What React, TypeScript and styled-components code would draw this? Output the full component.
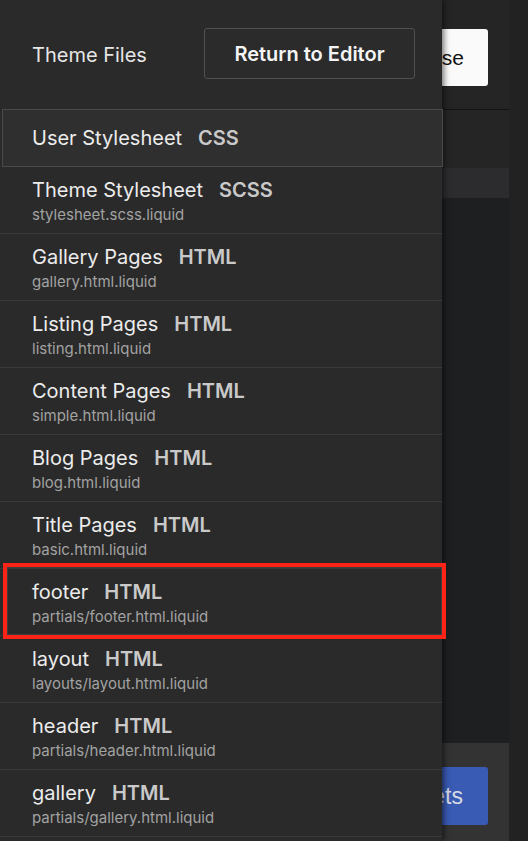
import styled, { createGlobalStyle } from 'styled-components';

const GlobalStyle = createGlobalStyle`
  html, body {
    margin: 0;
    padding: 0;
    height: 100%;
    background: #232323;
    overflow: hidden;
  }
  #root {
    height: 100%;
  }
  * {
    box-sizing: border-box;
  }
`;

const Page = styled.div`
  position: relative;
  display: flex;
  height: 100vh;
  background: #232323;
  font-family: Inter, 'Noto Sans', sans-serif;
`;

const Workspace = styled.div`
  display: flex;
  flex-direction: column;
  flex: 1;
  background: #252525;
`;

const SideStrip = styled.div`
  width: 19px;
  background: #222222;
`;

const TopBar = styled.div`
  display: flex;
  justify-content: flex-end;
  height: 110px;
  padding: 29px 21px 0 0;
  border-bottom: 1px solid #121212;
`;

const CloseButton = styled.button`
  height: 57px;
  padding: 0 24px;
  border: none;
  border-radius: 3px;
  background: #fafafa;
  color: #111;
  font-family: 'Liberation Sans', Arial, sans-serif;
  font-size: 21px;
`;

const TableGap = styled.div`
  height: 58px;
`;

const TableHead = styled.div`
  height: 30px;
  background: #2c2c2f;
`;

const TableBody = styled.div`
  flex: 1;
  background: #1e1f20;
`;

const FooterBar = styled.div`
  display: flex;
  justify-content: flex-end;
  height: 98px;
  padding: 24px 21px 0 0;
  background: #333333;
`;

const SaveButton = styled.button`
  height: 58px;
  padding: 0 25px 0 30px;
  border: none;
  border-radius: 3px;
  background: #3a5bb4;
  color: #d8dbe4;
  font-family: 'Liberation Sans', Arial, sans-serif;
  font-size: 23px;
`;

const Drawer = styled.aside`
  position: absolute;
  top: 0;
  left: 0;
  bottom: 0;
  width: 442px;
  background: #2a2a2a;
  box-shadow: 2px 0 6px rgba(0, 0, 0, 0.55);
`;

const DrawerHeader = styled.div`
  display: flex;
  align-items: center;
  justify-content: space-between;
  height: 109px;
  padding: 0 27px 0 32px;
`;

const DrawerTitle = styled.span`
  color: #e6e6e6;
  font-size: 20px;
`;

const ReturnButton = styled.button`
  width: 211px;
  height: 51px;
  margin-top: -2px;
  border: 1px solid #505050;
  border-radius: 3px;
  background: #2b2b2b;
  color: #f4f4f4;
  font-family: Inter, 'Noto Sans', sans-serif;
  font-size: 20px;
  font-weight: 600;
`;

const FileList = styled.ul`
  margin: 0;
  padding: 0;
  list-style: none;
`;

const FileRow = styled.li<{ $active?: boolean }>`
  position: relative;
  display: flex;
  flex-direction: column;
  justify-content: ${({ $active }) => ($active ? 'center' : 'flex-start')};
  height: ${({ $active }) => ($active ? '58px' : '67px')};
  margin: ${({ $active }) => ($active ? '0 -1px 0 2px' : '0')};
  padding: ${({ $active }) => ($active ? '0 29px' : '11px 32px 0')};
  border: ${({ $active }) => ($active ? '1px solid #4a4a4a' : 'none')};
  border-bottom: 1px solid ${({ $active }) => ($active ? '#4a4a4a' : '#3a3a3a')};
  background: ${({ $active }) => ($active ? '#2f2f2f' : 'transparent')};
`;

const FileName = styled.div`
  display: flex;
  gap: 16px;
  color: #ececec;
  font-size: 20px;
  line-height: 24px;
`;

const FileType = styled.span`
  color: #c9c9c9;
  font-weight: 600;
`;

const FilePath = styled.div`
  margin-top: 4px;
  color: #a2a2a2;
  font-size: 15px;
  line-height: 18px;
`;

const Highlight = styled.div`
  position: absolute;
  top: -6px;
  left: 3px;
  right: -4px;
  bottom: -4px;
  border: 4px solid #fb2416;
  box-shadow: inset 0 0 0 1px #3e3e3e;
  pointer-events: none;
`;

interface ThemeFile {
  name: string;
  type: string;
  path?: string;
  active?: boolean;
  flagged?: boolean;
}

const files: ThemeFile[] = [
  { name: 'User Stylesheet', type: 'CSS', active: true },
  { name: 'Theme Stylesheet', type: 'SCSS', path: 'stylesheet.scss.liquid' },
  { name: 'Gallery Pages', type: 'HTML', path: 'gallery.html.liquid' },
  { name: 'Listing Pages', type: 'HTML', path: 'listing.html.liquid' },
  { name: 'Content Pages', type: 'HTML', path: 'simple.html.liquid' },
  { name: 'Blog Pages', type: 'HTML', path: 'blog.html.liquid' },
  { name: 'Title Pages', type: 'HTML', path: 'basic.html.liquid' },
  { name: 'footer', type: 'HTML', path: 'partials/footer.html.liquid', flagged: true },
  { name: 'layout', type: 'HTML', path: 'layouts/layout.html.liquid' },
  { name: 'header', type: 'HTML', path: 'partials/header.html.liquid' },
  { name: 'gallery', type: 'HTML', path: 'partials/gallery.html.liquid' },
];

export default function App() {
  return (
    <>
      <GlobalStyle />
      <Page>
        <Workspace>
          <TopBar>
            <CloseButton type="button">Close</CloseButton>
          </TopBar>
          <TableGap />
          <TableHead />
          <TableBody />
          <FooterBar>
            <SaveButton type="button">Upload Assets</SaveButton>
          </FooterBar>
        </Workspace>
        <SideStrip />

        <Drawer>
          <DrawerHeader>
            <DrawerTitle>Theme Files</DrawerTitle>
            <ReturnButton type="button">Return to Editor</ReturnButton>
          </DrawerHeader>
          <FileList>
            {files.map((file) => (
              <FileRow key={file.name} $active={file.active}>
                <FileName>
                  {file.name}
                  <FileType>{file.type}</FileType>
                </FileName>
                {file.path && <FilePath>{file.path}</FilePath>}
                {file.flagged && <Highlight />}
              </FileRow>
            ))}
          </FileList>
        </Drawer>
      </Page>
    </>
  );
}
